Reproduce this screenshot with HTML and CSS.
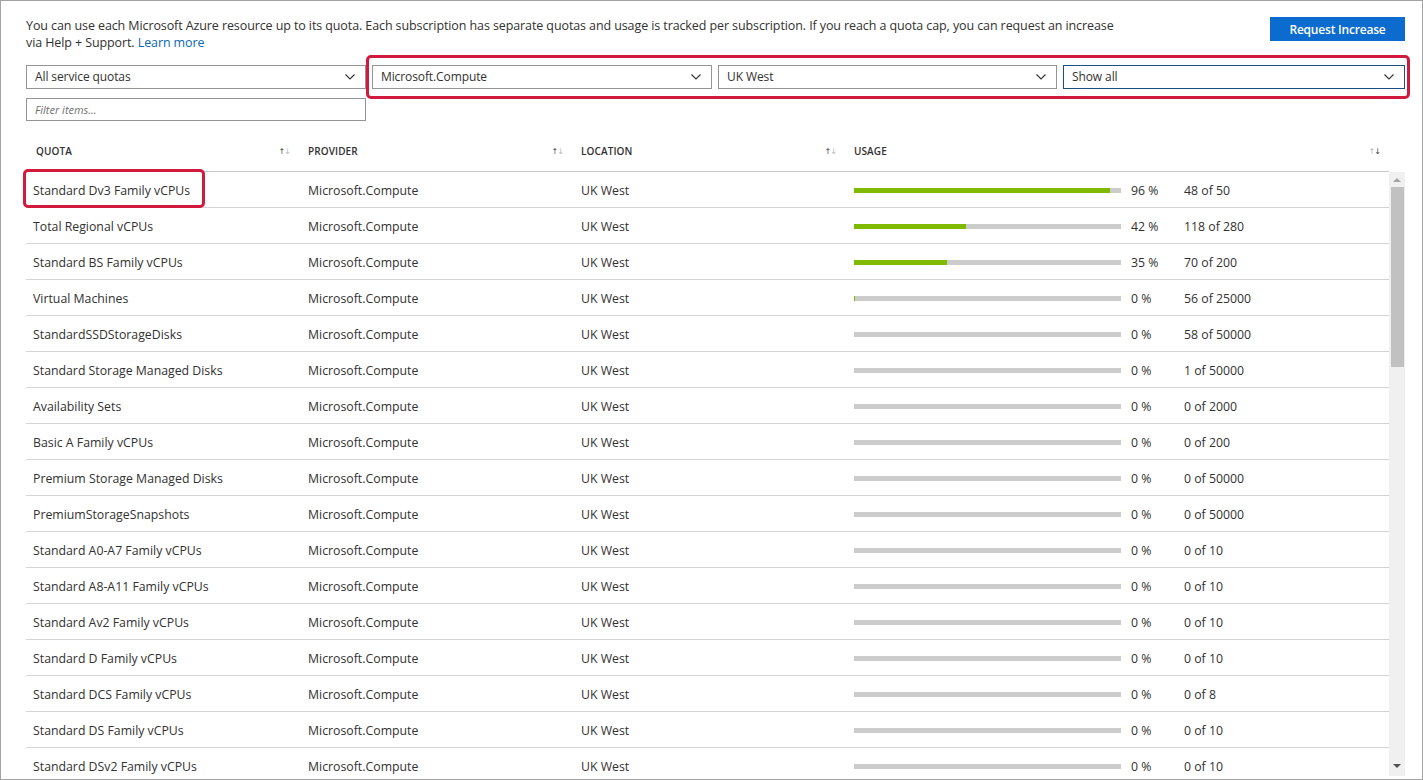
FILE: index.html
```html
<!DOCTYPE html>
<html lang="en">
<head>
    <meta charset="UTF-8">
    <title>Quotas</title>
    <link rel="stylesheet" href="styles.css">
</head>
<body>
    <div class="panel">
        <div class="intro">
            <p class="intro-text">
                You can use each Microsoft Azure resource up to its quota. Each subscription has separate quotas and usage is tracked per subscription. If you reach a quota cap, you can request an increase<br>
                via Help + Support. <a href="#" class="link">Learn more</a>
            </p>
            <button class="primary-btn">Request Increase</button>
        </div>

        <div class="filter-row">
            <div class="dropdown">All service quotas <svg class="chevron" viewBox="0 0 10 6"><path d="M0.5 0.5 L5 5 L9.5 0.5"/></svg></div>
            <div class="dropdown">Microsoft.Compute <svg class="chevron" viewBox="0 0 10 6"><path d="M0.5 0.5 L5 5 L9.5 0.5"/></svg></div>
            <div class="dropdown">UK West <svg class="chevron" viewBox="0 0 10 6"><path d="M0.5 0.5 L5 5 L9.5 0.5"/></svg></div>
            <div class="dropdown focused">Show all <svg class="chevron" viewBox="0 0 10 6"><path d="M0.5 0.5 L5 5 L9.5 0.5"/></svg></div>
            <div class="highlight filters-highlight"></div>
        </div>

        <input class="filter-input" type="text" placeholder="Filter items...">

        <div class="grid">
            <div class="grid-head">
                <div class="col col-quota head-quota">QUOTA <span class="sort"><span class="on">↑</span><span>↓</span></span></div>
                <div class="col col-provider">PROVIDER <span class="sort"><span class="on">↑</span><span>↓</span></span></div>
                <div class="col col-location">LOCATION <span class="sort"><span class="on">↑</span><span>↓</span></span></div>
                <div class="col col-usage">USAGE <span class="sort"><span>↑</span><span class="on">↓</span></span></div>
            </div>
            <div class="grid-body">
                <div class="rows">
                    <div class="row">
                        <div class="col col-quota">Standard Dv3 Family vCPUs</div>
                        <div class="col col-provider">Microsoft.Compute</div>
                        <div class="col col-location">UK West</div>
                        <div class="col col-usage"><div class="bar"><div class="fill" style="width: 96%"></div></div><span class="pct">96 %</span><span class="count">48 of 50</span></div>
                    </div>
                    <div class="row">
                        <div class="col col-quota">Total Regional vCPUs</div>
                        <div class="col col-provider">Microsoft.Compute</div>
                        <div class="col col-location">UK West</div>
                        <div class="col col-usage"><div class="bar"><div class="fill" style="width: 42%"></div></div><span class="pct">42 %</span><span class="count">118 of 280</span></div>
                    </div>
                    <div class="row">
                        <div class="col col-quota">Standard BS Family vCPUs</div>
                        <div class="col col-provider">Microsoft.Compute</div>
                        <div class="col col-location">UK West</div>
                        <div class="col col-usage"><div class="bar"><div class="fill" style="width: 35%"></div></div><span class="pct">35 %</span><span class="count">70 of 200</span></div>
                    </div>
                    <div class="row">
                        <div class="col col-quota">Virtual Machines</div>
                        <div class="col col-provider">Microsoft.Compute</div>
                        <div class="col col-location">UK West</div>
                        <div class="col col-usage"><div class="bar"><div class="fill" style="width: 1px"></div></div><span class="pct">0 %</span><span class="count">56 of 25000</span></div>
                    </div>
                    <div class="row">
                        <div class="col col-quota">StandardSSDStorageDisks</div>
                        <div class="col col-provider">Microsoft.Compute</div>
                        <div class="col col-location">UK West</div>
                        <div class="col col-usage"><div class="bar"></div><span class="pct">0 %</span><span class="count">58 of 50000</span></div>
                    </div>
                    <div class="row">
                        <div class="col col-quota">Standard Storage Managed Disks</div>
                        <div class="col col-provider">Microsoft.Compute</div>
                        <div class="col col-location">UK West</div>
                        <div class="col col-usage"><div class="bar"></div><span class="pct">0 %</span><span class="count">1 of 50000</span></div>
                    </div>
                    <div class="row">
                        <div class="col col-quota">Availability Sets</div>
                        <div class="col col-provider">Microsoft.Compute</div>
                        <div class="col col-location">UK West</div>
                        <div class="col col-usage"><div class="bar"></div><span class="pct">0 %</span><span class="count">0 of 2000</span></div>
                    </div>
                    <div class="row">
                        <div class="col col-quota">Basic A Family vCPUs</div>
                        <div class="col col-provider">Microsoft.Compute</div>
                        <div class="col col-location">UK West</div>
                        <div class="col col-usage"><div class="bar"></div><span class="pct">0 %</span><span class="count">0 of 200</span></div>
                    </div>
                    <div class="row">
                        <div class="col col-quota">Premium Storage Managed Disks</div>
                        <div class="col col-provider">Microsoft.Compute</div>
                        <div class="col col-location">UK West</div>
                        <div class="col col-usage"><div class="bar"></div><span class="pct">0 %</span><span class="count">0 of 50000</span></div>
                    </div>
                    <div class="row">
                        <div class="col col-quota">PremiumStorageSnapshots</div>
                        <div class="col col-provider">Microsoft.Compute</div>
                        <div class="col col-location">UK West</div>
                        <div class="col col-usage"><div class="bar"></div><span class="pct">0 %</span><span class="count">0 of 50000</span></div>
                    </div>
                    <div class="row">
                        <div class="col col-quota">Standard A0-A7 Family vCPUs</div>
                        <div class="col col-provider">Microsoft.Compute</div>
                        <div class="col col-location">UK West</div>
                        <div class="col col-usage"><div class="bar"></div><span class="pct">0 %</span><span class="count">0 of 10</span></div>
                    </div>
                    <div class="row">
                        <div class="col col-quota">Standard A8-A11 Family vCPUs</div>
                        <div class="col col-provider">Microsoft.Compute</div>
                        <div class="col col-location">UK West</div>
                        <div class="col col-usage"><div class="bar"></div><span class="pct">0 %</span><span class="count">0 of 10</span></div>
                    </div>
                    <div class="row">
                        <div class="col col-quota">Standard Av2 Family vCPUs</div>
                        <div class="col col-provider">Microsoft.Compute</div>
                        <div class="col col-location">UK West</div>
                        <div class="col col-usage"><div class="bar"></div><span class="pct">0 %</span><span class="count">0 of 10</span></div>
                    </div>
                    <div class="row">
                        <div class="col col-quota">Standard D Family vCPUs</div>
                        <div class="col col-provider">Microsoft.Compute</div>
                        <div class="col col-location">UK West</div>
                        <div class="col col-usage"><div class="bar"></div><span class="pct">0 %</span><span class="count">0 of 10</span></div>
                    </div>
                    <div class="row">
                        <div class="col col-quota">Standard DCS Family vCPUs</div>
                        <div class="col col-provider">Microsoft.Compute</div>
                        <div class="col col-location">UK West</div>
                        <div class="col col-usage"><div class="bar"></div><span class="pct">0 %</span><span class="count">0 of 8</span></div>
                    </div>
                    <div class="row">
                        <div class="col col-quota">Standard DS Family vCPUs</div>
                        <div class="col col-provider">Microsoft.Compute</div>
                        <div class="col col-location">UK West</div>
                        <div class="col col-usage"><div class="bar"></div><span class="pct">0 %</span><span class="count">0 of 10</span></div>
                    </div>
                    <div class="row">
                        <div class="col col-quota">Standard DSv2 Family vCPUs</div>
                        <div class="col col-provider">Microsoft.Compute</div>
                        <div class="col col-location">UK West</div>
                        <div class="col col-usage"><div class="bar"></div><span class="pct">0 %</span><span class="count">0 of 10</span></div>
                    </div>
                    <div class="row">
                        <div class="col col-quota">Standard DSv3 Family vCPUs</div>
                        <div class="col col-provider">Microsoft.Compute</div>
                        <div class="col col-location">UK West</div>
                        <div class="col col-usage"><div class="bar"></div><span class="pct">0 %</span><span class="count">0 of 10</span></div>
                    </div>
                </div>
                <div class="scrollbar">
                    <div class="arrow-up"></div>
                    <div class="thumb"></div>
                    <div class="track-rest"></div>
                    <div class="arrow-down"></div>
                </div>
            </div>
            <div class="highlight cell-highlight"></div>
        </div>
    </div>
</body>
</html>
```

FILE: styles.css
```css
html, body {
    margin: 0;
    padding: 0;
    height: 100%;
}

body {
    font-family: 'Open Sans', 'Noto Sans', sans-serif;
    font-size: 12px;
    color: #323130;
    background: white;
}

.panel {
    box-sizing: border-box;
    height: 100vh;
    border: 1px solid #a3a3a3;
    padding: 16px 17px 3px 25px;
    display: flex;
    flex-direction: column;
}

.intro {
    display: flex;
    justify-content: space-between;
    align-items: flex-start;
}

.intro-text {
    margin: 0;
    font-size: 12.5px;
    line-height: 17px;
    letter-spacing: -0.1px;
}

.link {
    color: #0a67b5;
    text-decoration: none;
}

.primary-btn {
    width: 135px;
    height: 24px;
    border: none;
    background-color: #0b6bcf;
    color: white;
    font-family: inherit;
    font-size: 12px;
    font-weight: 600;
    letter-spacing: -0.2px;
    padding: 0;
    cursor: pointer;
}

.filter-row {
    position: relative;
    margin-top: 14px;
    display: grid;
    grid-template-columns: 340px 340px 339px 1fr;
    gap: 6px;
}

.dropdown {
    box-sizing: border-box;
    height: 24px;
    border: 1px solid #959595;
    padding: 0 10px 1px 8px;
    display: flex;
    align-items: center;
    justify-content: space-between;
    font-size: 12px;
    letter-spacing: -0.1px;
}

.dropdown.focused {
    border-color: #1c4f80;
}

.chevron {
    width: 10px;
    height: 6px;
    fill: none;
    stroke: #333;
    stroke-width: 1.1;
}

.highlight {
    position: absolute;
    border: 3px solid #d2193e;
    border-radius: 5px;
    pointer-events: none;
}

.filters-highlight {
    left: 340px;
    top: -10px;
    right: -5px;
    bottom: -10px;
}

.filter-input {
    box-sizing: border-box;
    width: 340px;
    height: 23px;
    margin: 9px 0 0;
    border: 1px solid #959595;
    padding: 0 8px;
    font-family: inherit;
    font-size: 11px;
    font-style: italic;
    outline: none;
}

.filter-input::placeholder {
    color: #707070;
}

.grid {
    position: relative;
    flex: 1;
    min-height: 0;
    margin-top: 10px;
    display: flex;
    flex-direction: column;
}

.grid-head {
    display: flex;
    height: 40px;
    margin-right: 16px;
    border-bottom: 1px solid #c8c8c8;
    font-size: 10px;
    font-weight: 600;
    letter-spacing: 0.1px;
}

.grid-head .col {
    display: flex;
    align-items: center;
    justify-content: space-between;
    padding-right: 9px;
}

.grid-head .head-quota {
    padding-left: 10px;
}

.sort {
    font-family: 'DejaVu Sans', sans-serif;
    font-size: 8px;
    font-weight: normal;
    color: #b5b5b5;
    letter-spacing: -1px;
}

.sort .on {
    color: #444;
}

.grid-body {
    flex: 1;
    min-height: 0;
    display: flex;
}

.rows {
    flex: 1;
    overflow: hidden;
    font-size: 12.3px;
}

.row {
    display: flex;
    height: 35px;
    border-bottom: 1px solid #d3d3d3;
}

.row .col {
    padding-top: 2px;
}

.col {
    box-sizing: border-box;
    padding-left: 9px;
    display: flex;
    align-items: center;
}

.col-quota {
    width: 273px;
    padding-left: 7px;
}

.col-provider,
.col-location {
    width: 273px;
}

.col-usage {
    flex: 1;
}

.cell-highlight {
    left: -3px;
    top: 38px;
    width: 176px;
    height: 33px;
}

.bar {
    width: 267px;
    height: 5px;
    background-color: #cccccc;
    margin-right: 10px;
}

.fill {
    height: 100%;
    background-color: #7fba00;
}

.pct {
    width: 53px;
}

.scrollbar {
    width: 16px;
    background-color: #f0f0f0;
    display: flex;
    flex-direction: column;
    align-items: center;
}

.arrow-up {
    margin: 6px 0 5px;
    width: 0;
    height: 0;
    border-left: 4px solid transparent;
    border-right: 4px solid transparent;
    border-bottom: 4px solid #a3a3a3;
}

.thumb {
    width: 13px;
    height: 180px;
    background-color: #c1c1c1;
}

.track-rest {
    flex: 1;
}

.arrow-down {
    margin: 5px 0 8px;
    width: 0;
    height: 0;
    border-left: 4px solid transparent;
    border-right: 4px solid transparent;
    border-top: 4px solid #505050;
}
```
